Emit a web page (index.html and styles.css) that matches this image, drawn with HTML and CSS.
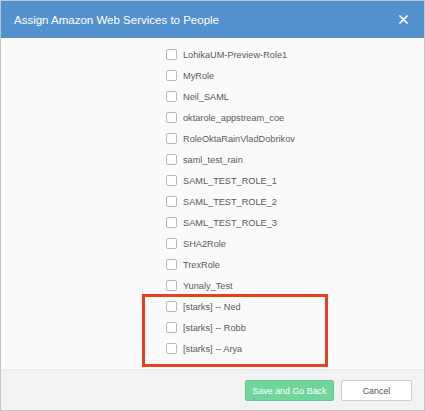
FILE: index.html
```html
<!DOCTYPE html>
<html>
<head>
<meta charset="utf-8">
<link rel="stylesheet" href="styles.css">
</head>
<body>
<div class="dialog">
  <div class="header">
    <span class="title">Assign Amazon Web Services to People</span>
    <svg class="close" width="9" height="9" viewBox="0 0 9 9"><path d="M1 1 L8 8 M8 1 L1 8" stroke="#fff" stroke-width="1.7" stroke-linecap="round"/></svg>
  </div>
  <div class="content">
    <div class="list">
      <label class="row"><span class="box"></span><span>LohikaUM-Preview-Role1</span></label>
      <label class="row"><span class="box"></span><span>MyRole</span></label>
      <label class="row"><span class="box"></span><span>Neil_SAML</span></label>
      <label class="row"><span class="box"></span><span>oktarole_appstream_coe</span></label>
      <label class="row"><span class="box"></span><span>RoleOktaRainVladDobrikov</span></label>
      <label class="row"><span class="box"></span><span>saml_test_rain</span></label>
      <label class="row"><span class="box"></span><span>SAML_TEST_ROLE_1</span></label>
      <label class="row"><span class="box"></span><span>SAML_TEST_ROLE_2</span></label>
      <label class="row"><span class="box"></span><span>SAML_TEST_ROLE_3</span></label>
      <label class="row"><span class="box"></span><span>SHA2Role</span></label>
      <label class="row"><span class="box"></span><span>TrexRole</span></label>
      <label class="row"><span class="box"></span><span>Yunaly_Test</span></label>
      <div class="group">
        <label class="row"><span class="box"></span><span>[starks] -- Ned</span></label>
        <label class="row"><span class="box"></span><span>[starks] -- Robb</span></label>
        <label class="row"><span class="box"></span><span>[starks] -- Arya</span></label>
      </div>
    </div>
  </div>
  <div class="footer">
    <button class="btn btn-save">Save and Go Back</button>
    <button class="btn btn-cancel">Cancel</button>
  </div>
</div>
</body>
</html>
```

FILE: styles.css
```css
* { box-sizing: border-box; }
html, body { margin: 0; padding: 0; background: #fff; }
body { font-family: "Liberation Sans", Arial, sans-serif; }

.dialog {
  width: 425px;
  height: 411px;
  border: 1px solid #c4c4c4;
  display: flex;
  flex-direction: column;
  background: #fafafa;
}

.header {
  height: 37px;
  flex: none;
  background: #5392cf;
  display: flex;
  align-items: center;
  justify-content: space-between;
  padding: 0 16px 0 13px;
}
.title {
  color: #fff;
  font-size: 11.5px;
  letter-spacing: 0;
}
.close { display: block; }

.content {
  flex: 1;
  padding: 6px 0 10px 165px;
  background: #fafafa;
}
.list { display: flex; flex-direction: column; }
.row {
  height: 21px;
  display: flex;
  align-items: center;
  gap: 6px;
  font-size: 9.2px;
  color: #5a5a5a;
}
.box {
  width: 11px;
  height: 11px;
  border: 1px solid #b8b8b8;
  border-radius: 2px;
  background: #fff;
  flex: none;
}

.group { position: relative; display: flex; flex-direction: column; }
.group::after {
  content: "";
  position: absolute;
  left: -24px;
  top: -2px;
  width: 180px;
  height: 67px;
  border: 3px solid #e8401f;
  pointer-events: none;
}

.footer {
  height: 41px;
  flex: none;
  border-top: 2px solid #ececec;
  background: #f2f2f2;
  display: flex;
  align-items: center;
  justify-content: flex-end;
  gap: 7px;
  padding: 0 12px 0 0;
}
.btn {
  height: 21px;
  font-family: "Liberation Sans", Arial, sans-serif;
  font-size: 8.9px;
  border-radius: 2px;
  padding: 0;
}
.btn-save {
  width: 89px;
  background: #70d59b;
  border: 1px solid #62c98e;
  color: #fff;
}
.btn-cancel {
  width: 71px;
  background: #fff;
  border: 1px solid #cfcfcf;
  color: #555;
}
```
